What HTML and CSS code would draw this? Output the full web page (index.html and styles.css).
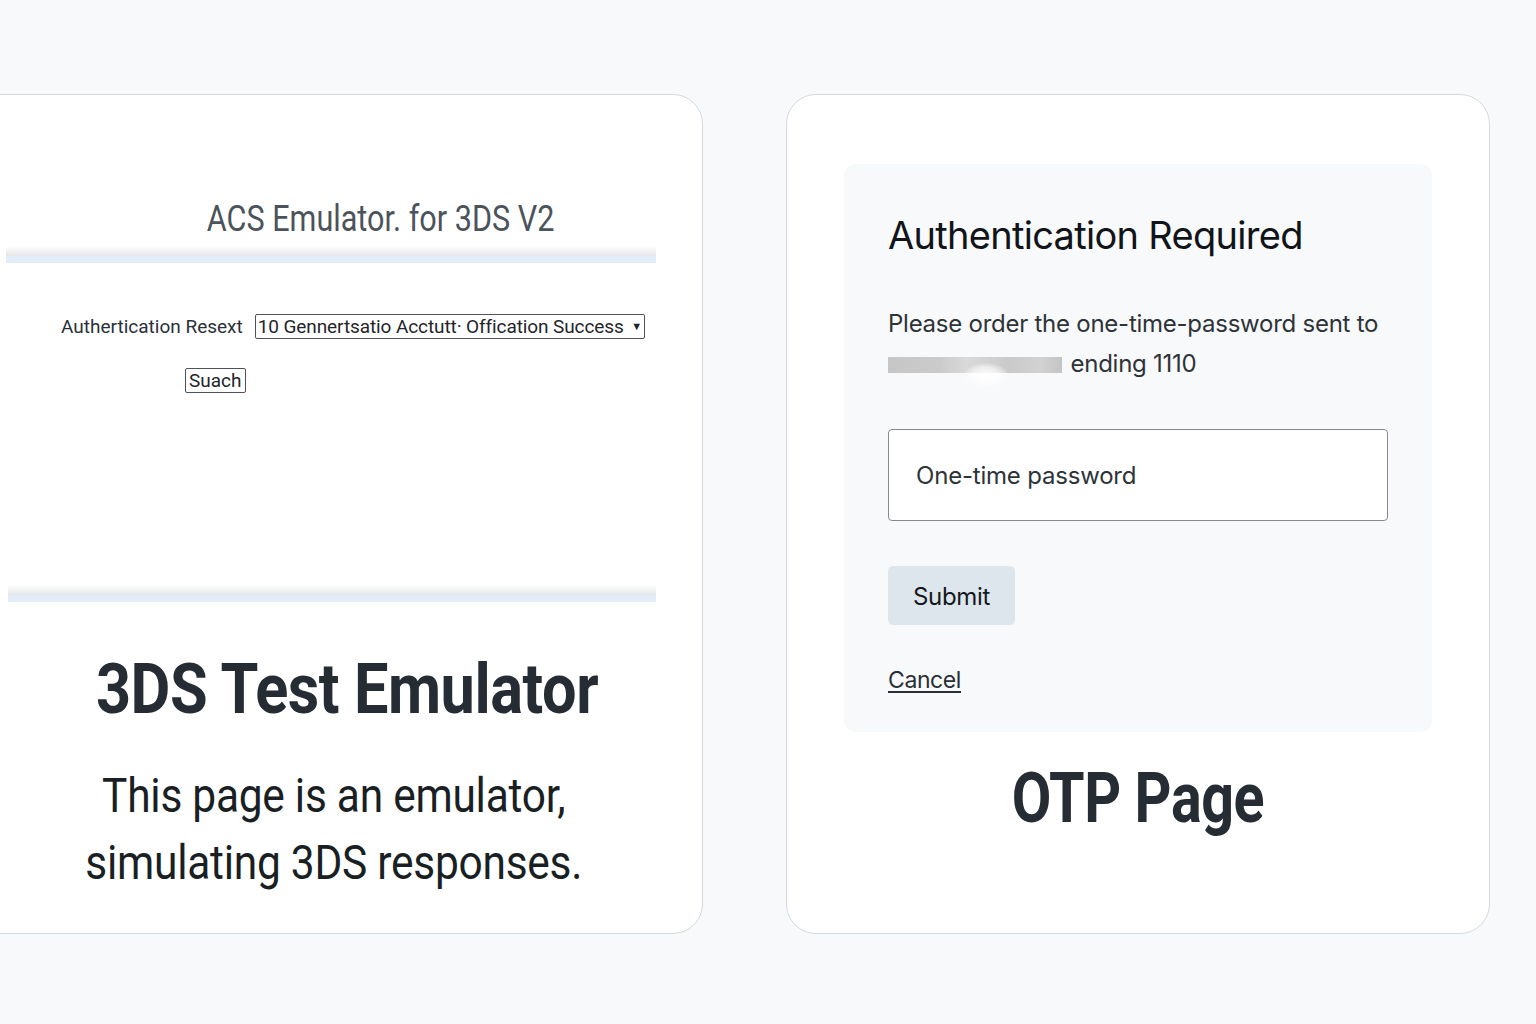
FILE: index.html
```html
<!DOCTYPE html>
<html lang="en">
<head>
<meta charset="utf-8">
<title>3DS Test Emulator / OTP Page</title>
<link rel="stylesheet" href="styles.css">
</head>
<body>
<main class="stage">
  <section class="card card-acs">
    <div class="acs-head">
      <h2 class="acs-title"><span class="narrow">ACS Emulator. for 3DS V2</span></h2>
    </div>
    <div class="rule"></div>
    <form class="acs-form">
      <div class="acs-row">
        <label class="acs-label">Authertication Resext</label>
        <div class="acs-select">10 Gennertsatio Acctutt· Offication Success <span class="caret">▼</span></div>
      </div>
      <div class="acs-btn-row">
        <button type="button" class="acs-btn">Suach</button>
      </div>
    </form>
    <div class="rule rule-2"></div>
    <h1 class="hero"><span class="narrow narrow-hero">3DS Test Emulator</span></h1>
    <p class="sub"><span class="narrow narrow-sub">This page is an emulator,<br>simulating 3DS responses.</span></p>
  </section>

  <section class="card card-otp">
    <div class="otp-panel">
      <h2 class="otp-title">Authentication Required</h2>
      <p class="otp-text">Please order the one-time-password sent to<br><span class="redact"></span> ending 1110</p>
      <div class="otp-input">One-time password</div>
      <button type="button" class="otp-submit">Submit</button>
      <a class="otp-cancel" href="#">Cancel</a>
    </div>
    <h1 class="hero hero-otp"><span class="narrow narrow-otp">OTP Page</span></h1>
  </section>
</main>
</body>
</html>
```
FILE: styles.css
```css
* { box-sizing: border-box; }

html, body {
  margin: 0;
  padding: 0;
  background: #f8f9fb;
  height: 100%;
  overflow: hidden;
}

.stage {
  display: flex;
  gap: 83px;
  padding-top: 94px;
  margin-left: -31px;
}

.card {
  width: 704px;
  height: 840px;
  background: #ffffff;
  border: 1px solid #d4d8df;
  border-radius: 30px;
  display: flex;
  flex-direction: column;
}

.narrow {
  display: inline-block;
  transform: scaleX(0.85);
  transform-origin: center;
}

.narrow-hero { transform: scaleX(0.875); }
.narrow-sub { transform: scaleX(0.885); }
.narrow-otp { transform: scaleX(0.82); }

/* ---------- left card ---------- */
.card-acs {
  width: 734px;
  padding-left: 30px;
  font-family: Roboto, "Liberation Sans", sans-serif;
  color: #2a3037;
}

.acs-head {
  padding-top: 104px;
  padding-left: 60px;
  text-align: center;
}

.acs-title {
  margin: 0;
  font-weight: 400;
  font-size: 36px;
  line-height: 40px;
  color: #4b535b;
}

.rule {
  margin: 7px 46px 0 6px;
  height: 17px;
  background:
    linear-gradient(to bottom, #e2edf9 0, #e2edf9 100%) bottom / 100% 7px no-repeat,
    linear-gradient(to bottom, rgba(232,232,234,0) 0, #e5e6e8 100%) top / 100% 10px no-repeat;
}

.rule-2 {
  margin-top: 192px;
  margin-left: 8px;
}

.acs-form {
  display: flex;
  flex-direction: column;
  padding-top: 51px;
}

.acs-row {
  display: flex;
  align-items: center;
  padding-left: 61px;
  gap: 12px;
}

.acs-label {
  font-size: 19px;
  color: #2a3037;
  letter-spacing: 0;
}

.acs-select {
  width: 390px;
  height: 25px;
  border: 1px solid #4d5359;
  border-radius: 2px;
  font-size: 19px;
  line-height: 23px;
  padding-left: 2px;
  color: #1f252b;
  white-space: nowrap;
  letter-spacing: -0.1px;
}

.caret {
  font-size: 11px;
  vertical-align: 3px;
  margin-left: 3px;
}

.acs-btn-row {
  padding-left: 185px;
  padding-top: 29px;
}

.acs-btn {
  height: 25px;
  padding: 0 3px;
  border: 1px solid #4d5359;
  border-radius: 2px;
  background: #ffffff;
  font-family: Roboto, "Liberation Sans", sans-serif;
  font-size: 19px;
  color: #1f252b;
  line-height: 22px;
}

.hero {
  margin: 47px 0 0;
  text-align: center;
  font-family: Roboto, "Liberation Sans", sans-serif;
  font-weight: 700;
  font-size: 70px;
  line-height: 80px;
  color: #262c33;
  padding-right: 8px;
  letter-spacing: -0.5px;
}

.sub {
  margin: 33px 0 0;
  text-align: center;
  font-size: 48px;
  line-height: 67px;
  color: #1a1f24;
  padding-right: 34px;
  letter-spacing: -0.3px;
}

/* ---------- right card ---------- */
.card-otp {
  padding: 69px 57px 0 57px;
  font-family: Inter, "Noto Sans", sans-serif;
}

.otp-panel {
  background: #f8f9fb;
  border-radius: 12px;
  height: 568px;
  padding: 47px 44px 0 44px;
  display: flex;
  flex-direction: column;
  align-items: flex-start;
}

.otp-title {
  margin: 0;
  font-weight: 400;
  font-size: 38px;
  line-height: 48px;
  color: #111418;
  letter-spacing: -0.7px;
}

.otp-text {
  margin: 45px 0 0;
  font-size: 24px;
  line-height: 40px;
  color: #2e3338;
  letter-spacing: -0.25px;
}

.redact {
  display: inline-block;
  width: 174px;
  height: 16px;
  vertical-align: -1px;
  margin-right: 2px;
  position: relative;
  background: linear-gradient(to right, #c6c6c6 0, #cbcbcb 30%, #d9d9d9 45%, #d4d4d4 55%, #cacaca 70%, #d2d2d2 88%, #c4c4c4 100%);
}

.redact::after {
  content: "";
  position: absolute;
  left: 76px;
  top: 6px;
  width: 44px;
  height: 24px;
  border-radius: 50%;
  background: radial-gradient(ellipse at center, rgba(255,255,255,0.95) 0, rgba(255,255,255,0.6) 45%, rgba(255,255,255,0) 75%);
}

.otp-input {
  margin-top: 45px;
  width: 500px;
  height: 92px;
  background: #ffffff;
  border: 1px solid #85898e;
  border-radius: 4px;
  padding-left: 27px;
  display: flex;
  align-items: center;
  font-size: 24px;
  color: #2e3338;
  letter-spacing: -0.2px;
}

.otp-submit {
  margin-top: 45px;
  width: 127px;
  height: 59px;
  border: none;
  border-radius: 5px;
  background: #dee6ed;
  font-family: Inter, "Noto Sans", sans-serif;
  font-size: 24px;
  padding-top: 3px;
  color: #15191d;
  letter-spacing: -0.3px;
}

.otp-cancel {
  margin-top: 41px;
  font-size: 23px;
  line-height: 28px;
  color: #2a2f35;
  text-decoration: underline;
  text-underline-offset: 3px;
  letter-spacing: -0.4px;
}

.hero-otp {
  margin-top: 26px;
  padding-right: 0;
}
```
